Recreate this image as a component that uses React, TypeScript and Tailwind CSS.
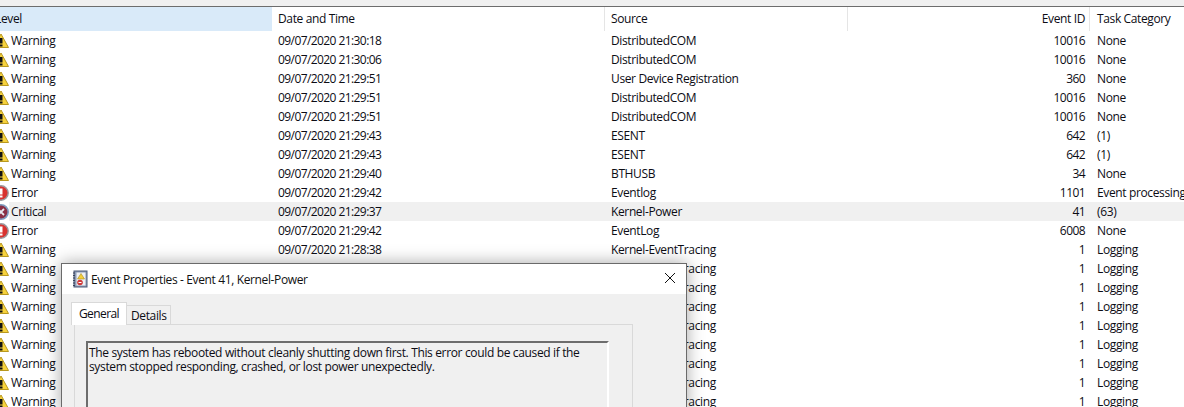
const COLS = "grid grid-cols-[272px_333px_243px_242px_94px] w-[1184px]";

type Level = "Warning" | "Error" | "Critical";

const ROWS: [Level, string, string, string, string][] = [
  ["Warning", "09/07/2020 21:30:18", "DistributedCOM", "10016", "None"],
  ["Warning", "09/07/2020 21:30:06", "DistributedCOM", "10016", "None"],
  ["Warning", "09/07/2020 21:29:51", "User Device Registration", "360", "None"],
  ["Warning", "09/07/2020 21:29:51", "DistributedCOM", "10016", "None"],
  ["Warning", "09/07/2020 21:29:51", "DistributedCOM", "10016", "None"],
  ["Warning", "09/07/2020 21:29:43", "ESENT", "642", "(1)"],
  ["Warning", "09/07/2020 21:29:43", "ESENT", "642", "(1)"],
  ["Warning", "09/07/2020 21:29:40", "BTHUSB", "34", "None"],
  ["Error", "09/07/2020 21:29:42", "Eventlog", "1101", "Event processing"],
  ["Critical", "09/07/2020 21:29:37", "Kernel-Power", "41", "(63)"],
  ["Error", "09/07/2020 21:29:42", "EventLog", "6008", "None"],
  ["Warning", "09/07/2020 21:28:38", "Kernel-EventTracing", "1", "Logging"],
  ["Warning", "09/07/2020 21:28:38", "Kernel-EventTracing", "1", "Logging"],
  ["Warning", "09/07/2020 21:28:38", "Kernel-EventTracing", "1", "Logging"],
  ["Warning", "09/07/2020 21:28:38", "Kernel-EventTracing", "1", "Logging"],
  ["Warning", "09/07/2020 21:28:38", "Kernel-EventTracing", "1", "Logging"],
  ["Warning", "09/07/2020 21:28:38", "Kernel-EventTracing", "1", "Logging"],
  ["Warning", "09/07/2020 21:28:38", "Kernel-EventTracing", "1", "Logging"],
  ["Warning", "09/07/2020 21:28:38", "Kernel-EventTracing", "1", "Logging"],
  ["Warning", "09/07/2020 21:28:38", "Kernel-EventTracing", "1", "Logging"],
];

function LevelIcon({ level }: { level: Level }) {
  if (level === "Warning") {
    return (
      <svg width="16" height="16" viewBox="0 0 16 16" className="shrink-0">
        <path d="M8 1 L15.5 14.5 H0.5 Z" fill="#f7d23c" stroke="#b8981f" strokeWidth="1" strokeLinejoin="round" />
        <rect x="6.5" y="5" width="3" height="5.5" fill="#111" />
        <rect x="6.5" y="11.5" width="3" height="2" fill="#111" />
      </svg>
    );
  }
  if (level === "Error") {
    return (
      <svg width="16" height="16" viewBox="0 0 16 16" className="shrink-0">
        <circle cx="8" cy="8" r="7.2" fill="#d8322f" stroke="#9a9a9f" strokeWidth="1.4" />
        <rect x="6.5" y="3.5" width="3" height="6" fill="#fff" />
        <rect x="6.5" y="10.5" width="3" height="2" fill="#fff" />
      </svg>
    );
  }
  return (
    <svg width="16" height="16" viewBox="0 0 16 16" className="shrink-0">
      <circle cx="8" cy="8" r="7.2" fill="#8a2f45" stroke="#7f9cc0" strokeWidth="1.6" />
      <path d="M5 5 L11 11 M11 5 L5 11" stroke="#e8e8ee" strokeWidth="1.8" />
    </svg>
  );
}

export default function App() {
  return (
    <div className="relative w-[1184px] h-[407px] overflow-hidden bg-white text-[12px] leading-[19px] tracking-[-0.37px] text-[#0c0c14] font-['Open_Sans','Noto_Sans',sans-serif]">
      <div className="h-[6px] bg-[#f0f0f0]" />
      <div className="h-px bg-[#6d6d6d]" />

      {/* column headers */}
      <div className={`${COLS} h-[24px] leading-[23px]`}>
        <div className="bg-[#d9eaf9] -indent-[5px] overflow-hidden whitespace-nowrap">Level</div>
        <div className="pl-[6px] border-r border-[#e5e5e5]">Date and Time</div>
        <div className="pl-[6px] border-r border-[#e5e5e5]">Source</div>
        <div className="pr-[4px] text-right border-r border-[#e5e5e5]">Event ID</div>
        <div className="pl-[7px] whitespace-nowrap">Task Category</div>
      </div>

      {/* rows */}
      <div>
        {ROWS.map(([level, date, source, id, task], i) => {
          const hl = level === "Critical" ? "bg-[#f0f0f0]" : "";
          return (
            <div key={i} className={`${COLS} h-[19px]`}>
              <div className="flex items-center -ml-[7px] whitespace-nowrap">
                <LevelIcon level={level} />
                <span className={`flex-1 h-[19px] pl-[2px] ${hl}`}>{level}</span>
              </div>
              <div className={`pl-[6px] tracking-[-0.58px] ${hl}`}>{date}</div>
              <div className={`pl-[6px] ${hl}`}>{source}</div>
              <div className={`pr-[5px] text-right tracking-[-0.58px] ${hl}`}>{id}</div>
              <div className={`pl-[7px] whitespace-nowrap overflow-hidden ${hl}`}>{task}</div>
            </div>
          );
        })}
      </div>

      {/* dialog window */}
      <div className="absolute left-[61px] top-[263px] w-[626px] h-[150px] border border-[#6a6a6a] bg-[#f0f0f0] shadow-[0_0_16px_rgba(0,0,0,0.35)]">
        <div className="h-[30px] bg-white flex items-center pl-[10px] pr-[10px]">
          <svg width="16" height="18" viewBox="0 0 16 18" className="shrink-0">
            <rect x="2" y="1" width="13" height="16" fill="#8d9bb5" stroke="#4c5a78" />
            <rect x="4.5" y="2.5" width="9" height="13" fill="#eef0f4" />
            <path d="M1 3h2M1 5.5h2M1 8h2M1 10.5h2M1 13h2M1 15.5h2" stroke="#39435a" />
            <path d="M9 3.5 L12.5 9 H5.5 Z" fill="#f5cf3a" stroke="#a88a1c" strokeWidth="0.6" />
            <circle cx="8" cy="12.5" r="2.8" fill="#cf3a3a" />
            <rect x="6.5" y="12" width="3" height="1" fill="#fff" />
          </svg>
          <span className="ml-[3px] text-[#111] whitespace-nowrap">Event Properties - Event 41, Kernel-Power</span>
          <svg width="12" height="12" viewBox="0 0 12 12" className="ml-auto mb-[2px]">
            <path d="M1 1 L11 11 M11 1 L1 11" stroke="#111" strokeWidth="1" />
          </svg>
        </div>

        <div className="pl-[9px] pt-[8px]">
          <div className="flex items-end h-[23px]">
            <div className="relative z-10 w-[56px] h-[23px] border border-b-0 border-[#d9d9d9] bg-white pl-[7px] leading-[22px] tracking-[-0.6px]">General</div>
            <div className="w-[44px] h-[20px] border border-l-0 border-b-0 border-[#d9d9d9] pl-[4px] leading-[20px]">Details</div>
          </div>
          <div className="ml-[3px] w-[559px] h-[100px] border border-[#d9d9d9] -mt-px pl-[11px] pt-[16px]">
            <div className="w-[523px] h-[80px] border-t-2 border-l-2 border-t-[#6d6d6d] border-l-[#6d6d6d] border-r-2 border-r-white pl-[1px] pt-[3px] leading-[14px] tracking-[-0.35px] whitespace-nowrap">
              The system has rebooted without cleanly shutting down first. This error could be caused if the
              <br />
              system stopped responding, crashed, or lost power unexpectedly.
            </div>
          </div>
        </div>
      </div>
    </div>
  );
}
